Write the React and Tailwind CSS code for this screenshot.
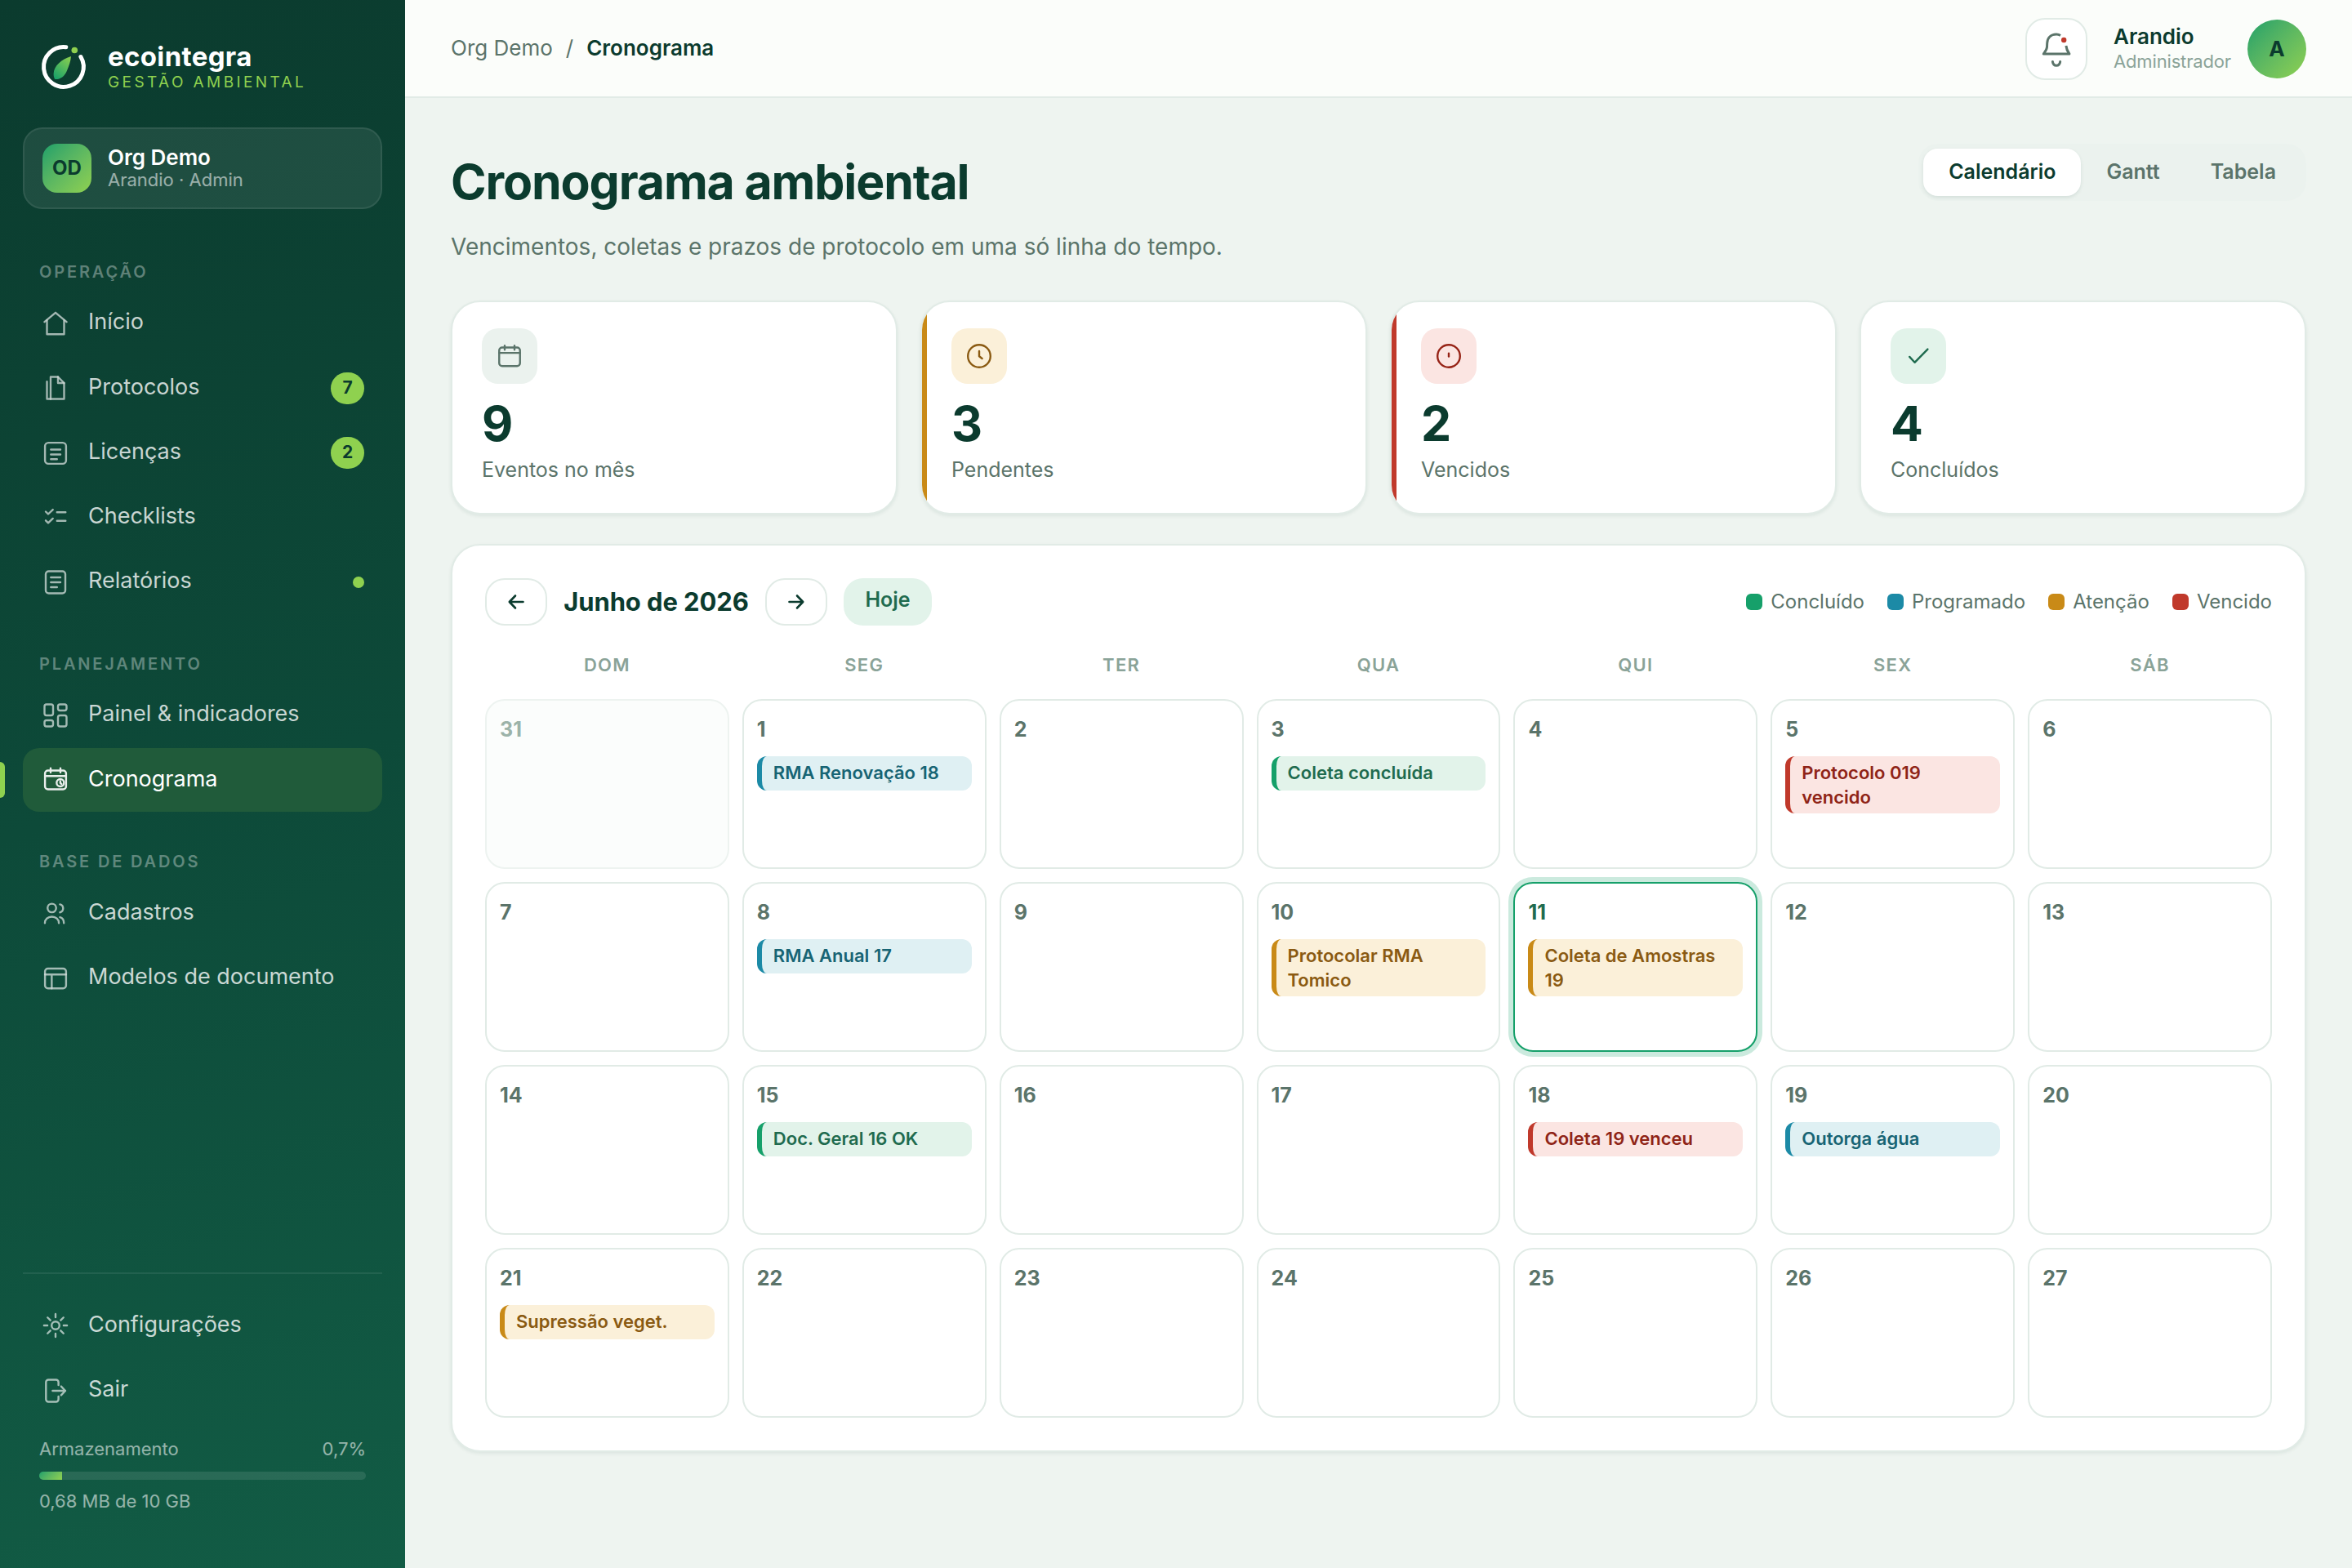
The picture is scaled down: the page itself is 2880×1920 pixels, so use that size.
import { useState } from 'react';
import clsx from 'clsx';

// ícones desenhados numa grade de 24
const ICONS = {
  home: <><path d="M3 10.8 12 3.2l9 7.6" /><path d="M5 9.5v11.3h14V9.5" /></>,
  files: <><path d="M8 3h6l5 5v13H8z" /><path d="M14 3v5h5" /><path d="M5 6.8V21h3" /></>,
  license: <><rect x="3.4" y="3.4" width="17.2" height="17.2" rx="2.8" /><path d="M8.2 9h7.8M8.2 13h7.8M8.2 16.8h5" /></>,
  checklist: <><path d="M4 7l2 2 3.8-3.6M4 14.2l2 2 3.8-3.6" /><path d="M13.2 7.5h7M13.2 14.5h7" /></>,
  report: <><rect x="4" y="3" width="16" height="18" rx="2.4" /><path d="M8.2 8h7.8M8.2 12h7.8M8.2 16h5" /></>,
  dashboard: (
    <>
      <rect x="3" y="3" width="7" height="9" rx="1.6" />
      <rect x="14" y="3" width="7" height="5" rx="1.6" />
      <rect x="14" y="12" width="7" height="9" rx="1.6" />
      <rect x="3" y="16" width="7" height="5" rx="1.6" />
    </>
  ),
  schedule: (
    <>
      <rect x="3.4" y="4.3" width="17.2" height="15.4" rx="2.4" />
      <path d="M3.4 8.8h17.2M8 2.4v3.4M16 2.4v3.4" />
      <circle cx="15.9" cy="14.3" r="3" />
      <path d="M15.9 13v1.5l1 .8" />
    </>
  ),
  users: (
    <>
      <circle cx="9" cy="7.9" r="3.5" />
      <path d="M3.3 20.2c0-3 2.4-5.2 5.7-5.2s5.7 2.2 5.7 5.2" />
      <path d="M15.6 4.9a3.4 3.4 0 0 1 0 6.6M15.6 15.4c2 .4 3.2 2.4 3.2 4.8" />
    </>
  ),
  layout: <><rect x="3.4" y="4" width="17.2" height="16.2" rx="2.4" /><path d="M3.4 8.8h17.2M8.9 8.8v11.4" /></>,
  sun: (
    <>
      <circle cx="12" cy="12" r="3.2" />
      <path d="M12 2.6v2.8M12 18.6v2.8M2.6 12h2.8M18.6 12h2.8M5.5 5.5l2.3 2.3M16.2 16.2l2.3 2.3M5.5 18.5l2.3-2.3M16.2 7.8l2.3-2.3" />
    </>
  ),
  exit: (
    <>
      <path d="M14.4 7.4V5a2 2 0 0 0-2-2H6.2a2 2 0 0 0-2 2v14a2 2 0 0 0 2 2h6.2a2 2 0 0 0 2-2v-2.4" />
      <path d="M9.6 12H20M16.6 8.4 20 12l-3.4 3.6" />
    </>
  ),
  calendar: <><rect x="3.5" y="5" width="17" height="15.2" rx="2.4" /><path d="M3.5 9.4h17M8 3.4v3.4M16 3.4v3.4" /></>,
  clock: <><circle cx="12" cy="12" r="9.2" /><path d="M12 8v4.2l2.4 1.8" /></>,
  alert: <><circle cx="12" cy="12" r="9.2" /><path d="M12 9.8v2.6" /></>,
  check: <path d="M4.8 12.6 9 17.2 19.6 6.4" />,
  left: <path d="M20.5 12H4M11 4.5 3.8 12l7.2 7.5" />,
  right: <path d="M3.5 12H20M13 4.5l7.2 7.5-7.2 7.5" />,
};

function Icon({ name, className = 'size-9', strokeWidth = 1.6 }) {
  return (
    <svg viewBox="0 0 24 24" fill="none" stroke="currentColor" strokeWidth={strokeWidth}
      strokeLinecap="round" strokeLinejoin="round" className={clsx('shrink-0', className)}>
      {ICONS[name]}
    </svg>
  );
}

const NAV = [
  {
    title: 'Operação',
    items: [
      { label: 'Início', icon: 'home' },
      { label: 'Protocolos', icon: 'files', badge: '7' },
      { label: 'Licenças', icon: 'license', badge: '2' },
      { label: 'Checklists', icon: 'checklist' },
      { label: 'Relatórios', icon: 'report', dot: true },
    ],
  },
  {
    title: 'Planejamento',
    items: [
      { label: 'Painel & indicadores', icon: 'dashboard' },
      { label: 'Cronograma', icon: 'schedule', active: true },
    ],
  },
  {
    title: 'Base de dados',
    items: [
      { label: 'Cadastros', icon: 'users' },
      { label: 'Modelos de documento', icon: 'layout' },
    ],
  },
];

const STATS = [
  { value: 9, label: 'Eventos no mês', icon: 'calendar', box: 'bg-[#ebf2ee] text-[#5b746a]' },
  { value: 3, label: 'Pendentes', icon: 'clock', box: 'bg-[#fbf0d9] text-[#8a5a12]', bar: 'bg-[#c98a17]' },
  { value: 2, label: 'Vencidos', icon: 'alert', box: 'bg-[#fbe5e2] text-[#962316]', bar: 'bg-[#c0392b]' },
  { value: 4, label: 'Concluídos', icon: 'check', box: 'bg-[#e2f3ea] text-[#1f6b4f]' },
];

const LEGEND = [
  { label: 'Concluído', color: 'bg-[#16a06a]' },
  { label: 'Programado', color: 'bg-[#1c8aa6]' },
  { label: 'Atenção', color: 'bg-[#c98a17]' },
  { label: 'Vencido', color: 'bg-[#c0392b]' },
];

const TONES = {
  ok: 'bg-[#e2f3ea] text-[#1f6b4f] border-[#16a06a]',
  info: 'bg-[#dff0f3] text-[#176474] border-[#1c8aa6]',
  warn: 'bg-[#fbf0d9] text-[#8a5a12] border-[#c98a17]',
  late: 'bg-[#fbe5e2] text-[#8f2417] border-[#c0392b]',
};

const EVENTS = {
  1: { text: 'RMA Renovação 18', tone: 'info' },
  3: { text: 'Coleta concluída', tone: 'ok' },
  5: { text: 'Protocolo 019 vencido', tone: 'late' },
  8: { text: 'RMA Anual 17', tone: 'info' },
  10: { text: 'Protocolar RMA Tomico', tone: 'warn' },
  11: { text: 'Coleta de Amostras 19', tone: 'warn' },
  15: { text: 'Doc. Geral 16 OK', tone: 'ok' },
  18: { text: 'Coleta 19 venceu', tone: 'late' },
  19: { text: 'Outorga água', tone: 'info' },
  21: { text: 'Supressão veget.', tone: 'warn' },
};

const WEEKDAYS = ['Dom', 'Seg', 'Ter', 'Qua', 'Qui', 'Sex', 'Sáb'];
const TODAY = 11;
const DAYS = [{ day: 31, muted: true }, ...Array.from({ length: 27 }, (_, i) => ({ day: i + 1 }))];

function Logo() {
  return (
    <svg viewBox="0 0 60 60" fill="none" className="size-[60px] shrink-0">
      <defs>
        <linearGradient id="leaf" x1="18" y1="44" x2="40" y2="18" gradientUnits="userSpaceOnUse">
          <stop offset="0" stopColor="#16a06a" />
          <stop offset="1" stopColor="#8fd14f" />
        </linearGradient>
      </defs>
      <path d="M32.8 5.7A24.4 24.4 0 1 0 50.9 17.5" stroke="#fff" strokeWidth="5" strokeLinecap="round" />
      <path d="M39 17C28 20 17.8 28.5 17.6 38.5c0 3 .6 5 1.6 6.5 6 .6 11.8-3 14.8-10.5C36.5 28.5 38.5 23 39 17z" fill="url(#leaf)" />
      <circle cx="43.3" cy="9.5" r="3.8" fill="#8fd14f" />
    </svg>
  );
}

function NavItem({ item }) {
  return (
    <a className={clsx(
      'relative flex h-[78px] items-center gap-[22px] rounded-[20px] px-[22px] text-[27px]',
      item.active ? 'bg-[#205b3a] text-white' : 'text-white/78',
    )}>
      {item.active && <span className="absolute top-[17px] -left-7 h-11 w-1.5 rounded-r-[6px] bg-[#8fd14f]" />}
      <Icon name={item.icon} className={clsx('size-9', item.active ? 'opacity-90' : 'opacity-80')} />
      <span className="flex-1 pb-[3px] whitespace-nowrap">{item.label}</span>
      {item.badge && (
        <span className="flex h-[39px] min-w-[41px] items-center justify-center rounded-full bg-[#8fd14f] pb-px text-[21px] font-bold text-[#0b3b2e]">
          {item.badge}
        </span>
      )}
      {item.dot && <span className="size-3.5 rounded-full bg-[#8fd14f]" />}
    </a>
  );
}

function Sidebar() {
  return (
    <aside className="flex h-full w-[496px] shrink-0 flex-col bg-[linear-gradient(165deg,#0b3b2e_0%,#0d4a39_50%,#125c45_100%)] px-7 pt-[52px] pb-[66px]">
      <div className="flex h-[60px] items-center gap-6 pl-5">
        <Logo />
        <div className="flex flex-col">
          <span className="text-[33px] leading-[36px] font-bold tracking-[0.35px] text-white">ecointegra</span>
          <span className="mt-px text-[19px] leading-[26px] tracking-[3.4px] text-[#8fd14f] uppercase">Gestão Ambiental</span>
        </div>
      </div>

      <div className="mt-11 flex h-[100px] shrink-0 items-center gap-5 rounded-[24px] border-2 border-white/8 bg-white/8 px-[22px]">
        <div className="flex size-[60px] items-center justify-center rounded-[18px] bg-linear-135 from-[#16a06a] to-[#8fd14f] text-[24px] font-bold text-[#0b3b2e]">
          OD
        </div>
        <div className="flex flex-col">
          <span className="text-[26px] leading-7 font-semibold text-white">Org Demo</span>
          <span className="text-[22px] leading-[27px] text-white/55">Arandio · Admin</span>
        </div>
      </div>

      <nav className="mt-4 flex flex-col">
        {NAV.map((group) => (
          <div key={group.title} className="mt-[46px] flex flex-col gap-[1.3px]">
            <h2 className="mb-[7.7px] pl-5 text-[20px] leading-[30px] font-semibold tracking-[2.85px] text-white/35 uppercase">
              {group.title}
            </h2>
            {group.items.map((item) => <NavItem key={item.label} item={item} />)}
          </div>
        ))}
      </nav>

      <div className="mt-auto flex flex-col gap-[1.3px] border-t-2 border-white/8 pt-6">
        <NavItem item={{ label: 'Configurações', icon: 'sun' }} />
        <NavItem item={{ label: 'Sair', icon: 'exit' }} />
        <div className="mt-[15px] flex flex-col px-5 text-[22px] leading-8 text-white/55">
          <div className="flex justify-between">
            <span>Armazenamento</span>
            <span>0,7%</span>
          </div>
          <div className="mt-3 mb-2.5 h-2.5 overflow-hidden rounded-full bg-white/10">
            <div className="h-full w-[7%] bg-linear-135 from-[#16a06a] to-[#8fd14f]" />
          </div>
          <span>0,68 MB de 10 GB</span>
        </div>
      </div>
    </aside>
  );
}

function Header() {
  return (
    <header className="flex h-[120px] shrink-0 items-center justify-between border-b-2 border-[#e1ebe6] bg-[#fbfdfa] px-14">
      <div className="flex gap-4 pb-px text-[26px] text-[#5b746a]">
        <span>Org Demo</span>
        <span>/</span>
        <span className="font-semibold text-[#0b3b2e]">Cronograma</span>
      </div>
      <div className="flex items-center pt-px">
        <button className="flex size-[76px] items-center justify-center rounded-[24px] border-2 border-[#e1ebe6] bg-white">
          <svg viewBox="0 0 44 44" fill="none" stroke="#5b746a" strokeWidth="3" strokeLinecap="round" strokeLinejoin="round" className="size-11">
            <path d="M27 5.5C25.5 4.5 23.8 4 22 4 15 4 11 8.5 10.7 15l-.2 4.5C10.3 23 8 25.5 6.3 28h31.6c-1.9-2.6-3.6-5.500-4-10" strokeLinecap="butt" />
            <path d="M17.4 37.5c.4 3 2.2 4.8 4.6 4.8s4.3-1.8 4.7-4.8" />
            <circle cx="31.2" cy="11" r="3.2" fill="#c0392b" stroke="none" />
          </svg>
        </button>
        <div className="ml-8 flex flex-col">
          <span className="text-[26px] leading-[30px] font-semibold text-[#0b3b2e]">Arandio</span>
          <span className="text-[22px] leading-[30px] tracking-[-0.15px] text-[#8aa398]">Administrador</span>
        </div>
        <div className="ml-5 flex size-[72px] items-center justify-center rounded-full bg-linear-135 from-[#16a06a] to-[#8fd14f] text-[26px] font-bold text-[#0b3b2e]">
          A
        </div>
      </div>
    </header>
  );
}

function StatCard({ stat }) {
  return (
    <div className="relative flex h-[262px] flex-col overflow-hidden rounded-[36px] border-2 border-[#e1ebe6] bg-white px-9 pt-8 shadow-[0_2px_4px_rgba(11,59,46,0.08)]">
      {stat.bar && <span className={clsx('absolute inset-y-0 left-0 w-1.5', stat.bar)} />}
      <div className={clsx('flex size-[68px] items-center justify-center rounded-[20px]', stat.box)}>
        <Icon name={stat.icon} />
      </div>
      <span className="mt-[18px] text-[59px] leading-[62px] font-bold text-[#0b3b2e]">{stat.value}</span>
      <span className="mt-[10px] text-[25px] leading-[30px] text-[#5b746a]">{stat.label}</span>
    </div>
  );
}

function DayCell({ day, muted }) {
  const event = !muted && EVENTS[day];
  const today = day === TODAY;
  return (
    <div className={clsx(
      'flex h-[208px] min-w-0 flex-col rounded-[24px] border-2 px-4 pt-4',
      muted && 'border-[#edf3f0] bg-[#fbfdfc] text-[#9cb3a9]',
      today && 'border-[#16a06a] bg-white text-[#1f6b4f] shadow-[0_0_0_6px_#cbeade]',
      !muted && !today && 'border-[#e1ebe6] bg-white text-[#5b746a]',
    )}>
      <span className="text-[25px] leading-[38px] font-bold">{day}</span>
      {event && (
        <div className={clsx('mt-[14px] min-h-[42px] rounded-[12px] border-l-[6px] py-[5px] pr-3 pl-3.5 text-[22px] leading-[30px] font-semibold', TONES[event.tone])}>
          {event.text}
        </div>
      )}
    </div>
  );
}

export default function App() {
  const [view, setView] = useState('Calendário');

  return (
    <div className="flex h-[1920px] w-[2880px] overflow-hidden bg-[#eef4f0] font-['Inter',sans-serif]">
      <Sidebar />
      <div className="flex min-w-0 flex-1 flex-col">
        <Header />
        <main className="flex flex-col px-14 pt-14">
          <div className="flex h-[192px] items-start justify-between">
            <div className="flex flex-col">
              <h1 className="mt-3 text-[59px] leading-[70px] font-bold tracking-[-1.15px] text-[#0b3b2e]">Cronograma ambiental</h1>
              <p className="mt-[26px] text-[28px] leading-9 text-[#5b746a]">
                Vencimentos, coletas e prazos de protocolo em uma só linha do tempo.
              </p>
            </div>
            <div className="flex h-[70px] rounded-[24px] bg-[#ebf2ee] p-1.5">
              {['Calendário', 'Gantt', 'Tabela'].map((name) => (
                <button key={name} onClick={() => setView(name)}
                  className={clsx(
                    'h-[58px] rounded-[18px] px-[31px] text-[25px] font-semibold',
                    view === name ? 'bg-white text-[#0b3b2e] shadow-[0_2px_4px_rgba(11,59,46,0.1)]' : 'text-[#5b746a]',
                  )}>
                  {name}
                </button>
              ))}
            </div>
          </div>

          <div className="grid grid-cols-4 gap-7">
            {STATS.map((stat) => <StatCard key={stat.label} stat={stat} />)}
          </div>

          <section className="mt-9 rounded-[36px] border-2 border-[#e1ebe6] bg-white p-10 shadow-[0_2px_4px_rgba(11,59,46,0.08)]">
            <div className="flex h-[58px] items-center justify-between">
              <div className="flex items-center gap-5 text-[#0b3b2e]">
                <button className="flex h-[58px] w-[76px] items-center justify-center rounded-[24px] border-2 border-[#e1ebe6]">
                  <Icon name="left" className="size-6" strokeWidth={2.6} />
                </button>
                <span className="w-[227px] text-center text-[31px] font-bold tracking-[-0.1px] whitespace-nowrap">Junho de 2026</span>
                <button className="flex h-[58px] w-[76px] items-center justify-center rounded-[24px] border-2 border-[#e1ebe6]">
                  <Icon name="right" className="size-6" strokeWidth={2.6} />
                </button>
                <button className="h-[58px] w-[108px] rounded-[24px] bg-[#e2f3ea] pb-1 text-[25px] font-semibold text-[#1f6b4f]">Hoje</button>
              </div>
              <div className="flex gap-7 text-[24px] text-[#5b746a]">
                {LEGEND.map((item) => (
                  <span key={item.label} className="flex items-center gap-2.5">
                    <span className={clsx('size-5 rounded-[6px]', item.color)} />
                    {item.label}
                  </span>
                ))}
              </div>
            </div>

            <div className="mt-8 grid grid-cols-7 gap-4 text-center text-[22px] leading-8 font-semibold tracking-[1.3px] text-[#8aa398] uppercase">
              {WEEKDAYS.map((name) => <span key={name}>{name}</span>)}
            </div>
            <div className="mt-[26px] grid grid-cols-7 gap-4">
              {DAYS.map((cell) => <DayCell key={cell.day} day={cell.day} muted={cell.muted} />)}
            </div>
          </section>
        </main>
      </div>
    </div>
  );
}
